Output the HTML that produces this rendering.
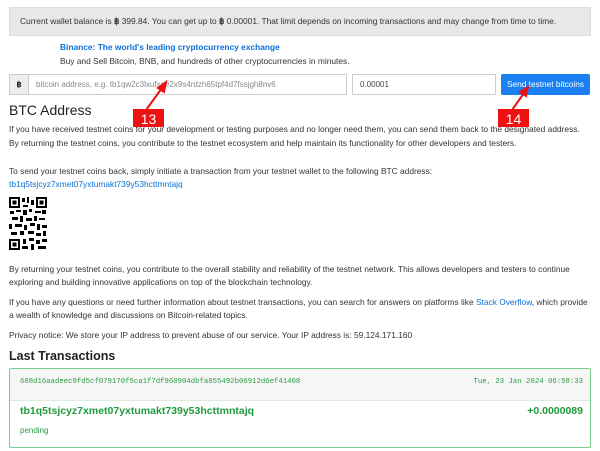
<!DOCTYPE html>
<html><head><style>
body{margin:0;width:600px;height:451px;background:#fff;font-family:"Liberation Sans",sans-serif;color:#222;position:relative;overflow:hidden}
.a{position:absolute;white-space:nowrap}
p{margin:0}
.t{font-size:8.4px;color:#333}
</style></head><body>
<div class="a" style="left:9px;top:7px;width:582px;height:29px;background:#e8e8e8;border:1px solid #dcdcdc;box-sizing:border-box"></div>
<div class="a t" style="left:20px;top:16px">Current wallet balance is <b>฿</b> 399.84. You can get up to <b>฿</b> 0.00001. That limit depends on incoming transactions and may change from time to time.</div>
<div class="a" style="left:60px;top:42px;font-size:8.4px;font-weight:bold;color:#0b6fd8">Binance: The world's leading cryptocurrency exchange</div>
<div class="a t" style="left:60px;top:56px">Buy and Sell Bitcoin, BNB, and hundreds of other cryptocurrencies in minutes.</div>
<div class="a" style="left:9px;top:74px;width:20px;height:21px;background:#eee;border:1px solid #ccc;box-sizing:border-box;font-size:8px;font-weight:bold;text-align:center;line-height:19px">฿</div>
<div class="a" style="left:28px;top:74px;width:319px;height:21px;border:1px solid #ccc;box-sizing:border-box;font-size:8px;color:#888;padding-left:7px;line-height:19px">bitcoin address, e.g. tb1qw2c3lxufxqe2x9s4rdzh65tpf4d7fssjgh8nv6</div>
<div class="a" style="left:352px;top:74px;width:144px;height:21px;border:1px solid #ccc;box-sizing:border-box;font-size:8px;color:#444;padding-left:7px;line-height:19px">0.00001</div>
<div class="a" style="left:501px;top:74px;width:89px;height:21px;background:#1a80f2;border-radius:2px;color:#fff;font-size:8.3px;text-align:center;line-height:21px">Send testnet bitcoins</div>
<div class="a" style="left:9px;top:102px;font-size:14px;color:#222">BTC Address</div>
<div class="a t" style="left:9px;top:124px">If you have received testnet coins for your development or testing purposes and no longer need them, you can send them back to the designated address.</div>
<div class="a t" style="left:9px;top:138px">By returning the testnet coins, you contribute to the testnet ecosystem and help maintain its functionality for other developers and testers.</div>
<div class="a t" style="left:9px;top:166px">To send your testnet coins back, simply initiate a transaction from your testnet wallet to the following BTC address:</div>
<div class="a t" style="left:9px;top:179px;color:#0b6fd8">tb1q5tsjcyz7xmet07yxtumakt739y53hcttmntajq</div>
<svg class="a" style="left:9px;top:197px" width="38" height="53" viewBox="0 0 38 53">
<rect x="0" y="0" width="38" height="53" fill="#fff"/>
<g fill="#000">
<rect x="0" y="0" width="11" height="11"/><rect x="2" y="2" width="7" height="7" fill="#fff"/><rect x="3.5" y="3.5" width="4" height="4"/>
<rect x="27" y="0" width="11" height="11"/><rect x="29" y="2" width="7" height="7" fill="#fff"/><rect x="30.5" y="3.5" width="4" height="4"/>
<rect x="0" y="42" width="11" height="11"/><rect x="2" y="44" width="7" height="7" fill="#fff"/><rect x="3.5" y="45.5" width="4" height="4"/>
<rect x="13" y="1" width="3" height="4"/><rect x="18" y="0" width="2" height="6"/><rect x="22" y="3" width="3" height="5"/><rect x="14" y="8" width="5" height="2"/>
<rect x="1" y="14" width="4" height="3"/><rect x="7" y="13" width="5" height="2"/><rect x="14" y="13" width="4" height="5"/><rect x="20" y="12" width="3" height="3"/><rect x="26" y="14" width="6" height="2"/><rect x="33" y="13" width="4" height="4"/>
<rect x="3" y="20" width="6" height="3"/><rect x="11" y="19" width="3" height="6"/><rect x="17" y="21" width="6" height="3"/><rect x="25" y="19" width="3" height="5"/><rect x="30" y="21" width="6" height="2"/>
<rect x="0" y="27" width="3" height="5"/><rect x="6" y="27" width="7" height="3"/><rect x="15" y="28" width="3" height="5"/><rect x="21" y="26" width="5" height="3"/><rect x="28" y="27" width="3" height="6"/><rect x="33" y="28" width="5" height="3"/>
<rect x="2" y="35" width="6" height="3"/><rect x="11" y="34" width="4" height="4"/><rect x="19" y="34" width="6" height="3"/><rect x="27" y="36" width="5" height="3"/><rect x="34" y="34" width="3" height="5"/>
<rect x="14" y="42" width="3" height="5"/><rect x="20" y="41" width="5" height="3"/><rect x="27" y="43" width="4" height="4"/><rect x="33" y="42" width="5" height="3"/><rect x="13" y="49" width="6" height="3"/><rect x="22" y="47" width="3" height="6"/><rect x="29" y="49" width="8" height="3"/>
</g></svg>
<div class="a t" style="left:9px;top:264px">By returning your testnet coins, you contribute to the overall stability and reliability of the testnet network. This allows developers and testers to continue</div>
<div class="a t" style="left:9px;top:277px">exploring and building innovative applications on top of the blockchain technology.</div>
<div class="a t" style="left:9px;top:297px">If you have any questions or need further information about testnet transactions, you can search for answers on platforms like <span style="color:#0b6fd8">Stack Overflow</span>, which provide</div>
<div class="a t" style="left:9px;top:310px">a wealth of knowledge and discussions on Bitcoin-related topics.</div>
<div class="a t" style="left:9px;top:330px">Privacy notice: We store your IP address to prevent abuse of our service. Your IP address is: 59.124.171.160</div>
<div class="a" style="left:9px;top:349px;font-size:12.5px;font-weight:bold;color:#222">Last Transactions</div>
<div class="a" style="left:9px;top:368px;width:582px;height:80px;border:1px solid #7fcc8f;border-radius:2px;box-sizing:border-box;overflow:hidden">
<div style="height:31px;background:#f6f6f6;border-bottom:1px solid #dfe9df"></div>
</div>
<div class="a" style="left:20px;top:378px;font-family:'Liberation Mono',monospace;font-size:7.3px;color:#2a9a45">608d16aadeec9fd5cf079170f5ca1f7df960904dbfa855492b06912d6ef41408</div>
<div class="a" style="right:17px;top:378px;font-family:'Liberation Mono',monospace;font-size:7.3px;color:#2a9a45">Tue, 23 Jan 2024 06:58:33</div>
<div class="a" style="left:20px;top:405px;font-size:10.5px;font-weight:bold;color:#1f9a3c">tb1q5tsjcyz7xmet07yxtumakt739y53hcttmntajq</div>
<div class="a" style="right:17px;top:405px;font-size:10.5px;font-weight:bold;color:#1f9a3c">+0.0000089</div>
<div class="a" style="left:20px;top:426px;font-size:8px;color:#2a9a45">pending</div>
<svg class="a" style="left:0;top:0" width="600" height="451">
<g stroke="#e11" stroke-width="2" fill="#e11">
<line x1="146" y1="110" x2="162" y2="88"/><polygon points="166,82 158,88 164,92"/>
<line x1="512" y1="110" x2="524" y2="93"/><polygon points="528,87 520,92 526,96"/>
</g>
<rect x="133" y="109" width="31" height="18" fill="#e11"/>
<rect x="498" y="109" width="31" height="18" fill="#e11"/>
<text x="148.5" y="124" font-family="Liberation Sans" font-size="14" fill="#fff" text-anchor="middle">13</text>
<text x="513.5" y="124" font-family="Liberation Sans" font-size="14" fill="#fff" text-anchor="middle">14</text>
</svg>
</body></html>
